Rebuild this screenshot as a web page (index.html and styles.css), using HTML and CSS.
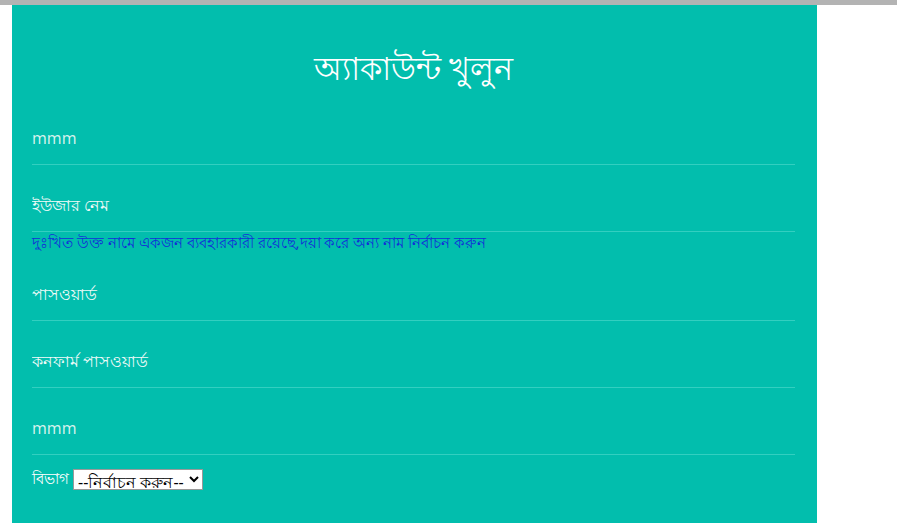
FILE: index.html
```
<!DOCTYPE html>
<html lang="bn">
<head>
<meta charset="utf-8">
<title>অ্যাকাউন্ট খুলুন</title>
<link rel="stylesheet" href="styles.css">
</head>
<body>
<div class="topbar"></div>
<div class="page">
  <form class="card">
    <h1 class="title">অ্যাকাউন্ট খুলুন</h1>
    <input class="field latin" type="text" placeholder="mmm">
    <input class="field" type="text" placeholder="ইউজার নেম">
    <div class="error">দুঃখিত উক্ত নামে একজন ব্যবহারকারী রয়েছে,দয়া করে অন্য নাম নির্বাচন করুন</div>
    <input class="field" type="password" placeholder="পাসওয়ার্ড" autofocus>
    <input class="field" type="password" placeholder="কনফার্ম পাসওয়ার্ড">
    <input class="field latin last" type="text" placeholder="mmm">
    <div class="dept">
      <label class="dept-label">বিভাগ</label>
      <select class="dept-select"><option>--নির্বাচন করুন--</option></select>
    </div>
  </form>
</div>
</body>
</html>
```
FILE: styles.css
```
html, body { margin: 0; padding: 0; background: #ffffff; }
body { font-family: "Noto Sans", "DejaVu Sans", sans-serif; }
.topbar { height: 5px; background: #b3b3b3; }
.page { padding-left: 12px; }
.card {
  width: 805px;
  min-height: 518px;
  box-sizing: border-box;
  background: #02bead;
  padding: 40px 22px 20px 20px;
  display: flex;
  flex-direction: column;
}
.title {
  margin: 0 0 24px 0;
  text-align: center;
  color: #ffffff;
  font-weight: normal;
  font-size: 32px;
  line-height: 45px;
}
.field {
  display: block;
  width: 100%;
  box-sizing: border-box;
  height: 51px;
  background: transparent;
  border: none;
  border-bottom: 1px solid #33cfc0;
  outline: none;
  padding: 0 0 3px 0;
  margin-bottom: 16px;
  font-size: 16px;
  color: #fff;
  caret-color: #555;
  font-family: "Noto Sans", "DejaVu Sans", sans-serif;
}
.field::placeholder { color: #f2fbf9; }
.field.latin::placeholder { color: #d8f3ee; font-family: "Open Sans", sans-serif; font-size: 16px; font-weight: 500; }
.field.last { margin-bottom: 12px; }
.error {
  color: #1230d8;
  font-size: 15px;
  line-height: 20px;
  margin-top: -16px;
  margin-bottom: 18px;
}
.dept { display: flex; align-items: center; gap: 4px; color: #fff; font-size: 15px; }
.dept-select { font-size: 16px; height: 21px; width: 130px; padding: 0; background: #fff; color: #000; border: 1px solid #999; font-family: "Noto Sans", sans-serif; }
```
